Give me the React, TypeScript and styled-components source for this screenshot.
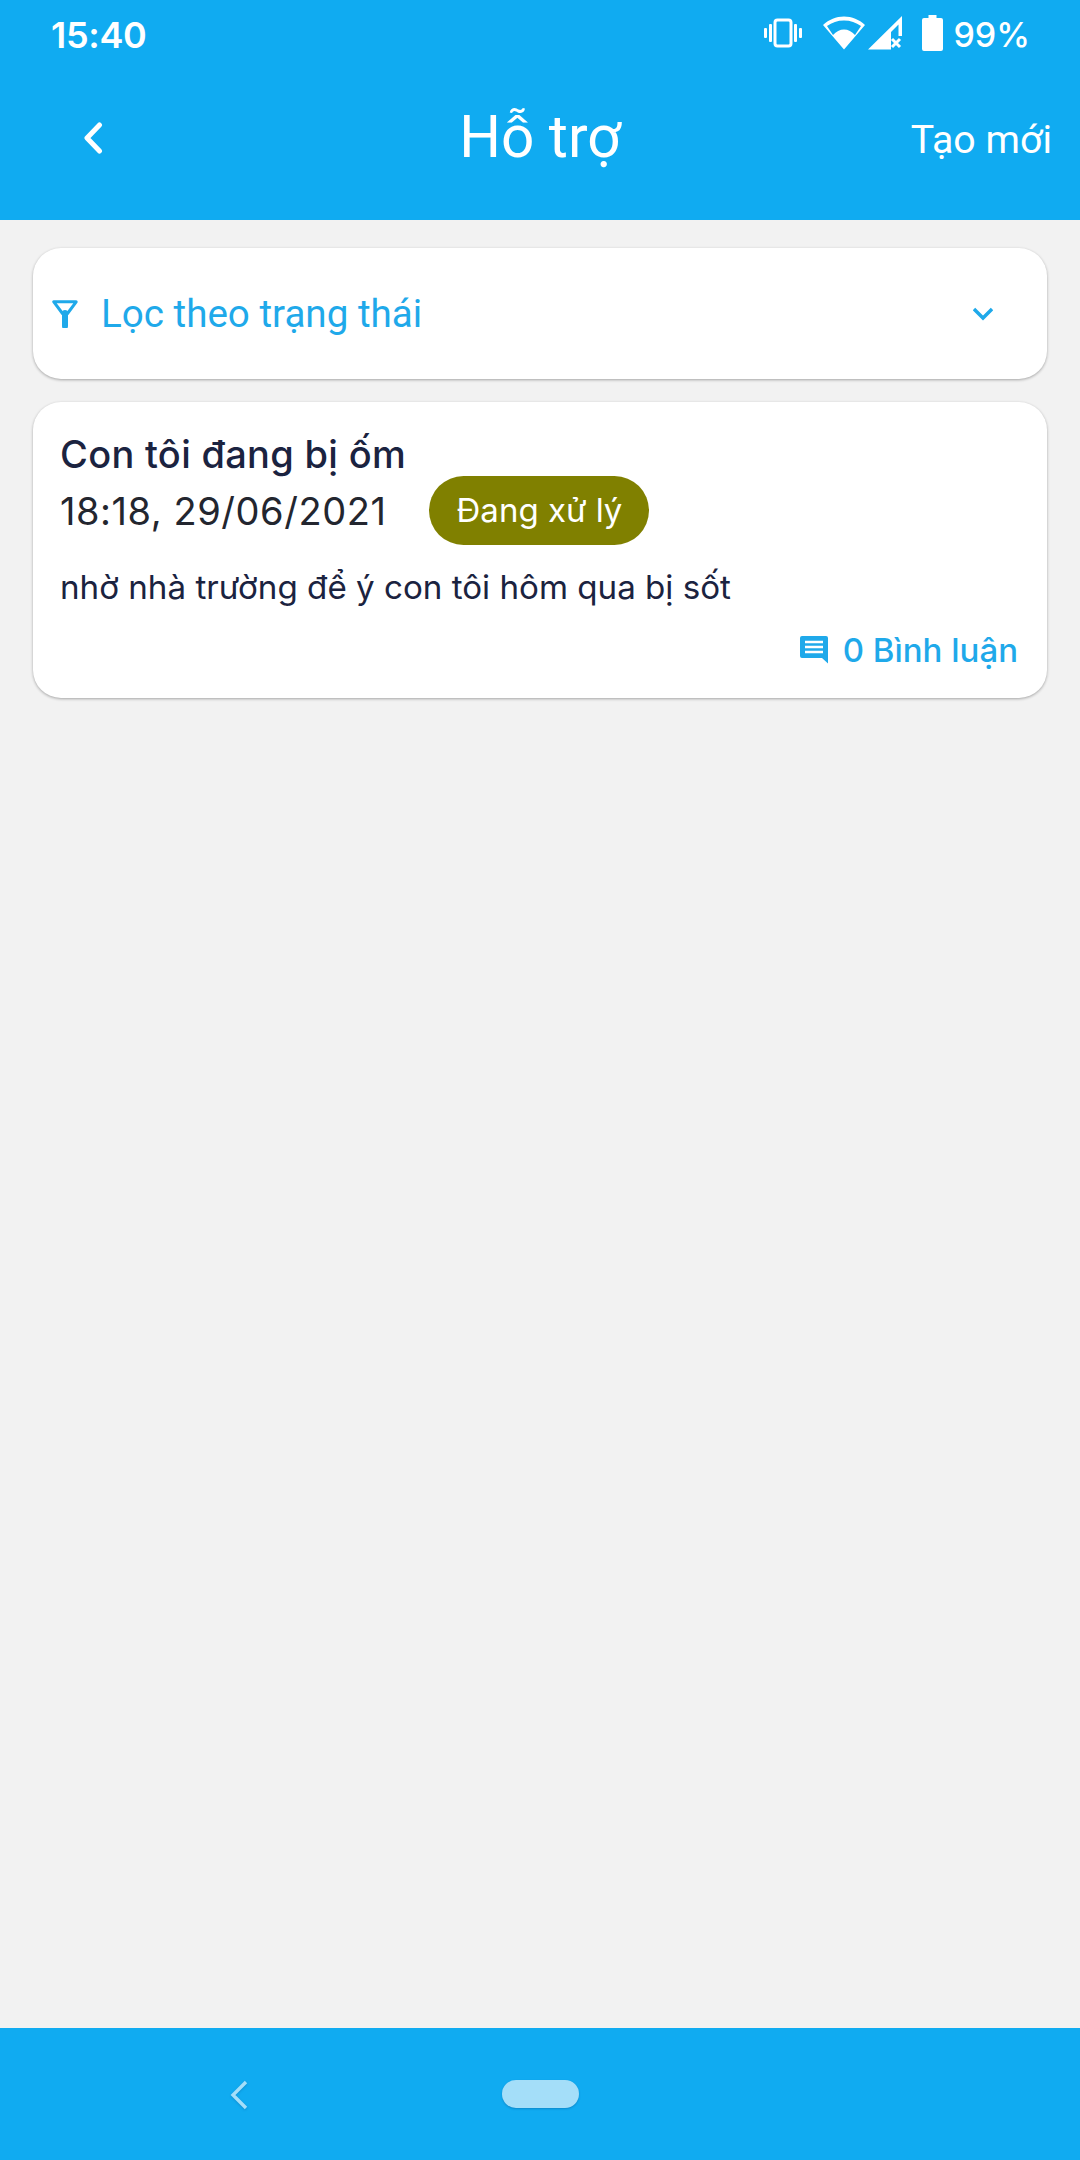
import React from "react";
import styled, { createGlobalStyle } from "styled-components";

const Global = createGlobalStyle`
  html, body { margin: 0; padding: 0; background: #f2f2f2; }
  * { box-sizing: border-box; }
`;

const Page = styled.div`
  width: 1080px;
  height: 2160px;
  display: flex;
  flex-direction: column;
  background: #f2f2f2;
  font-family: "Inter", sans-serif;
`;

const Header = styled.header`
  height: 220px;
  background: #10abf1;
  color: #fff;
  display: flex;
  flex-direction: column;
`;

const StatusBar = styled.div`
  height: 66px;
  padding: 4px 50px 0 51px;
  display: flex;
  align-items: center;
  justify-content: space-between;
`;

const Clock = styled.span`
  font: 600 36px/1 "Inter", sans-serif;
  letter-spacing: -0.3px;
`;

const StatusIcons = styled.div`
  display: flex;
  align-items: center;
`;

const StatusIcon = styled.svg<{ $gap?: number }>`
  display: block;
  margin-left: ${(p) => p.$gap ?? 0}px;
  margin-bottom: 4px;
  fill: #fff;
`;

const Percent = styled.span`
  font: 500 34px/1 "Inter", sans-serif;
  margin-left: 10px;
`;

const NavRow = styled.div`
  flex: 1;
  position: relative;
  display: flex;
  align-items: center;
  justify-content: space-between;
  padding: 0 28px 10px 83px;
`;

const Title = styled.h1`
  position: absolute;
  left: 0;
  right: 0;
  top: 38px;
  margin: 0;
  text-align: center;
  font: 400 58.5px/66px "Roboto", sans-serif;
`;

const Action = styled.span`
  margin-top: 3px;
  font: 400 39.3px/44px "Roboto", sans-serif;
`;

const Content = styled.main`
  flex: 1;
  padding: 28px 33px;
  display: flex;
  flex-direction: column;
  gap: 23px;
`;

const Card = styled.section`
  background: #fff;
  border-radius: 28px;
  box-shadow: 0 1px 3px rgba(0, 0, 0, 0.32);
`;

const Filter = styled(Card)`
  height: 131px;
  display: flex;
  align-items: center;
  padding: 0 54px 0 19px;
  color: #1fa9ea;
`;

const FilterLabel = styled.span`
  flex: 1;
  margin-left: 23px;
  font: 400 38.6px/44px "Roboto", sans-serif;
`;

const Ticket = styled(Card)`
  height: 296px;
  padding: 30px 29px 0 27px;
  display: flex;
  flex-direction: column;
`;

const TicketTitle = styled.h2`
  margin: 0;
  font: 500 38px/44px "Inter", sans-serif;
  letter-spacing: 0.3px;
  color: #1b2340;
`;

const MetaRow = styled.div`
  display: flex;
  align-items: center;
  margin-top: 0;
`;

const DateText = styled.span`
  font: 400 38px/44px "Inter", sans-serif;
  letter-spacing: 0.55px;
  color: #23262f;
`;

const Badge = styled.span`
  margin-left: 43px;
  width: 220px;
  height: 69px;
  border-radius: 35px;
  background: #808000;
  color: #fff;
  display: flex;
  align-items: center;
  justify-content: center;
  font: 400 33px/1 "Inter", sans-serif;
`;

const Body = styled.p`
  margin: 20px 0 0;
  font: 400 33.15px/44px "Inter", sans-serif;
  color: #1b2340;
`;

const Comments = styled.div`
  margin-top: 19px;
  display: flex;
  align-items: center;
  justify-content: flex-end;
  color: #1fa9ea;
  font: 500 33px/44px "Inter", sans-serif;
`;

const CommentText = styled.span`
  margin-left: 15px;
`;

const BottomNav = styled.footer`
  height: 132px;
  background: #10abf1;
  position: relative;
`;

const BackSoft = styled.svg`
  position: absolute;
  left: 229px;
  top: 52px;
  filter: drop-shadow(0 1px 1px rgba(0, 60, 120, 0.25));
`;

const HomePill = styled.div`
  position: absolute;
  left: 502px;
  top: 52px;
  width: 77px;
  height: 28px;
  border-radius: 14px;
  background: #a4def9;
  box-shadow: 0 1px 2px rgba(0, 60, 120, 0.3);
`;

export default function App() {
  return (
    <Page>
      <Global />
      <Header>
        <StatusBar>
          <Clock>15:40</Clock>
          <StatusIcons>
            <StatusIcon width="38" height="30" viewBox="0 0 38 30">
              <rect x="11" y="2" width="16" height="26" rx="2.5" fill="none" stroke="#fff" strokeWidth="3" />
              <rect x="0" y="10" width="3" height="10" rx="1" />
              <rect x="5" y="6" width="3" height="18" rx="1" />
              <rect x="30" y="6" width="3" height="18" rx="1" />
              <rect x="35" y="10" width="3" height="10" rx="1" />
            </StatusIcon>
            <StatusIcon $gap={21} width="42" height="34" viewBox="0 0 42 34">
              <path fillRule="evenodd" d="M21 33.5 L0 9 C6 3.5 13 0.5 21 0.5 S36 3.5 42 9 Z M21 13.5 C25 13.5 29 15.5 32 19 L38 10 C33 6.5 27.5 4.5 21 4.5 S9 6.5 4 10 L10 19 C13 15.5 17 13.5 21 13.5 Z" />
            </StatusIcon>
            <StatusIcon $gap={2} width="36" height="36" viewBox="0 0 36 36">
              <path d="M1 34.5 L35 1 V21 H31.5 V9.5 L24 17 V34.5 Z" />
              <path d="M25 24 L33 32 M33 24 L25 32" stroke="#fff" strokeWidth="3" />
            </StatusIcon>
            <StatusIcon $gap={19} width="21" height="36" viewBox="0 0 21 36">
              <path d="M6.5 0 H14.5 V3 H19 A2 2 0 0 1 21 5 V34 A2 2 0 0 1 19 36 H2 A2 2 0 0 1 0 34 V5 A2 2 0 0 1 2 3 H6.5 Z" />
            </StatusIcon>
            <Percent>99%</Percent>
          </StatusIcons>
        </StatusBar>
        <NavRow>
          <svg width="20" height="32" viewBox="0 0 20 32" fill="none" stroke="#fff" strokeWidth="5" strokeLinecap="round" strokeLinejoin="round">
            <path d="M16.5 3 L4 16 L16.5 29" />
          </svg>
          <Title>Hỗ trợ</Title>
          <Action>Tạo mới</Action>
        </NavRow>
      </Header>
      <Content>
        <Filter>
          <svg width="26" height="28" viewBox="0 0 26 28" fill="none" stroke="#1fa9ea" strokeWidth="3" strokeLinejoin="round">
            <path d="M1.8 1.8 H24.2 L15.5 13.5 H10.5 Z" />
            <path d="M13 13 V26" strokeWidth="6" strokeLinecap="round" />
          </svg>
          <FilterLabel>Lọc theo trạng thái</FilterLabel>
          <svg width="20" height="14" viewBox="0 0 20 14" fill="none" stroke="#1fa9ea" strokeWidth="3.4">
            <path d="M1 2 L10 11 L19 2" />
          </svg>
        </Filter>
        <Ticket>
          <TicketTitle>Con tôi đang bị ốm</TicketTitle>
          <MetaRow>
            <DateText>18:18, 29/06/2021</DateText>
            <Badge>Đang xử lý</Badge>
          </MetaRow>
          <Body>nhờ nhà trường để ý con tôi hôm qua bị sốt</Body>
          <Comments>
            <svg width="28" height="28" viewBox="0 0 28 28">
              <path fill="#1fa9ea" d="M2 0 H26 A2 2 0 0 1 28 2 V27.5 L22 22 H2 A2 2 0 0 1 0 20 V2 A2 2 0 0 1 2 0 Z" />
              <path stroke="#fff" strokeWidth="2.4" d="M5 6 H23 M5 11 H23 M5 16 H23" />
            </svg>
            <CommentText>0 Bình luận</CommentText>
          </Comments>
        </Ticket>
      </Content>
      <BottomNav>
        <BackSoft width="20" height="30" viewBox="0 0 20 30" fill="none" stroke="#a4def9" strokeWidth="3.4">
          <path d="M17 2 L4 15 L17 28" />
        </BackSoft>
        <HomePill />
      </BottomNav>
    </Page>
  );
}
